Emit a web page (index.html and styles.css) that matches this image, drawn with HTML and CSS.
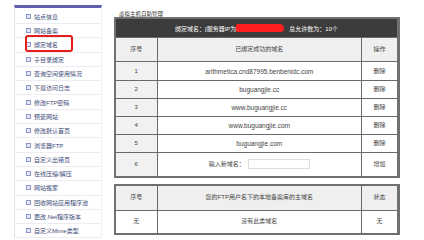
FILE: index.html
```html
<!DOCTYPE html>
<html>
<head>
    <title>虚拟主机自助管理</title>
    <link rel="stylesheet" href="styles.css">
</head>
<body>
    <div id="sidebar">
        <div class="menu-item"><span class="dot"></span>站点信息</div>
        <div class="menu-item"><span class="dot"></span>网站备案</div>
        <div class="menu-item"><span class="dot"></span><span class="marked">绑定域名</span></div>
        <div class="menu-item"><span class="dot"></span>子目录绑定</div>
        <div class="menu-item"><span class="dot"></span>查询空间使用情况</div>
        <div class="menu-item"><span class="dot"></span>下载访问日志</div>
        <div class="menu-item"><span class="dot"></span>修改FTP密码</div>
        <div class="menu-item"><span class="dot"></span>预装网站</div>
        <div class="menu-item"><span class="dot"></span>修改默认首页</div>
        <div class="menu-item"><span class="dot"></span>浏览器FTP</div>
        <div class="menu-item"><span class="dot"></span>自定义出错页</div>
        <div class="menu-item"><span class="dot"></span>在线压缩/解压</div>
        <div class="menu-item"><span class="dot"></span>网站搬家</div>
        <div class="menu-item"><span class="dot"></span>回收网站应用程序池</div>
        <div class="menu-item"><span class="dot"></span>更改.Net程序版本</div>
        <div class="menu-item"><span class="dot"></span>自定义Mime类型</div>
    </div>

    <div id="main">
        <div class="page-title">虚拟主机自助管理</div>

        <table class="grid">
            <colgroup>
                <col class="col-no">
                <col>
                <col class="col-op">
            </colgroup>
            <tr class="bar">
                <td colspan="3">绑定域名：[服务器IP为<span class="redact"></span>总允许数为：10个</td>
            </tr>
            <tr class="head">
                <td>序号</td>
                <td>已绑定成功的域名</td>
                <td>操作</td>
            </tr>
            <tr class="row first">
                <td class="num">1</td>
                <td class="domain">arithmetica.cnd87995.benbenidc.com</td>
                <td>删除</td>
            </tr>
            <tr class="row">
                <td class="num">2</td>
                <td class="domain">buguangjie.cc</td>
                <td>删除</td>
            </tr>
            <tr class="row">
                <td class="num">3</td>
                <td class="domain">www.buguangjie.cc</td>
                <td>删除</td>
            </tr>
            <tr class="row">
                <td class="num">4</td>
                <td class="domain">www.buguangjie.com</td>
                <td>删除</td>
            </tr>
            <tr class="row">
                <td class="num">5</td>
                <td class="domain">buguangjie.com</td>
                <td>删除</td>
            </tr>
            <tr class="row add">
                <td class="num">6</td>
                <td class="input-cell">输入新域名：<input type="text" class="new-domain"></td>
                <td>增加</td>
            </tr>
        </table>

        <table class="grid second">
            <colgroup>
                <col class="col-no">
                <col>
                <col class="col-op">
            </colgroup>
            <tr class="head tall">
                <td>序号</td>
                <td>您的FTP用户名下的本地备案库的主域名</td>
                <td>状态</td>
            </tr>
            <tr class="row add">
                <td>无</td>
                <td>没有此类域名</td>
                <td>无</td>
            </tr>
        </table>
    </div>
</body>
</html>
```

FILE: styles.css
```css
body {
    margin: 0;
    background: #fff;
    display: flex;
    align-items: flex-start;
    font-family: "Liberation Sans", "Noto Sans CJK SC", sans-serif;
    color: #444;
    width: 424px;
    height: 240px;
    overflow: hidden;
}

#sidebar {
    margin-left: 14px;
    margin-top: 5px;
    width: 86px;
    border-top: 3px solid #5b5fae;
    border-left: 1px solid #e2e2e8;
    border-right: 1px solid #f0f0f4;
}

.menu-item {
    height: 14.3px;
    display: flex;
    align-items: center;
    font-size: 6px;
    color: #3d4a78;
    border-bottom: 1px solid #ececf2;
    box-sizing: border-box;
    padding-left: 11px;
    white-space: nowrap;
}

.menu-item:first-child {
    height: 16px;
    padding-top: 2px;
}

.dot {
    width: 3px;
    height: 3px;
    border: 1px solid #8d97c8;
    background: #e6e9f7;
    margin-right: 3px;
    flex-shrink: 0;
}

.marked {
    position: relative;
}

.marked::after {
    content: '';
    position: absolute;
    left: -9px;
    top: -5px;
    width: 44px;
    height: 13px;
    border: 2px solid #e51d1d;
    border-radius: 3px;
}

#main {
    margin-left: 12px;
    padding-top: 11px;
    width: 286px;
}

.page-title {
    font-size: 5.5px;
    line-height: 6px;
    color: #333;
    padding-left: 5px;
}

.grid {
    width: 286px;
    border-collapse: collapse;
    border: 2px solid #707070;
    border-right-width: 3px;
    font-size: 6px;
    line-height: 7px;
    text-align: center;
    table-layout: fixed;
}

.col-no {
    width: 42px;
}

.col-op {
    width: 37px;
}

.grid td {
    border: 1px solid #6a6a6a;
    padding: 0;
    color: #444;
    white-space: nowrap;
}

.bar td {
    background: #3c3c3c;
    color: #fff;
    height: 18px;
}

.redact {
    display: inline-block;
    width: 48px;
    height: 8px;
    background: #ff1f1f;
    border-radius: 2px 5px 4px 2px;
    vertical-align: -1px;
    margin-right: 5px;
}

.head td {
    background: #efefef;
    height: 23px;
}

.head.tall td {
    height: 24px;
}

.row td {
    height: 17px;
    background: #fff;
}

.row.first td {
    height: 18px;
}

.row td.num {
    background: #f1f1f1;
}

.row.add td {
    height: 22.5px;
}

.domain {
    font-size: 6.5px;
}

.new-domain {
    width: 60px;
    height: 8px;
    padding: 0;
    border: 1px solid #ddd;
    vertical-align: middle;
    margin-left: 3px;
    font-size: 6px;
}

.second {
    margin-top: 6px;
}
```
